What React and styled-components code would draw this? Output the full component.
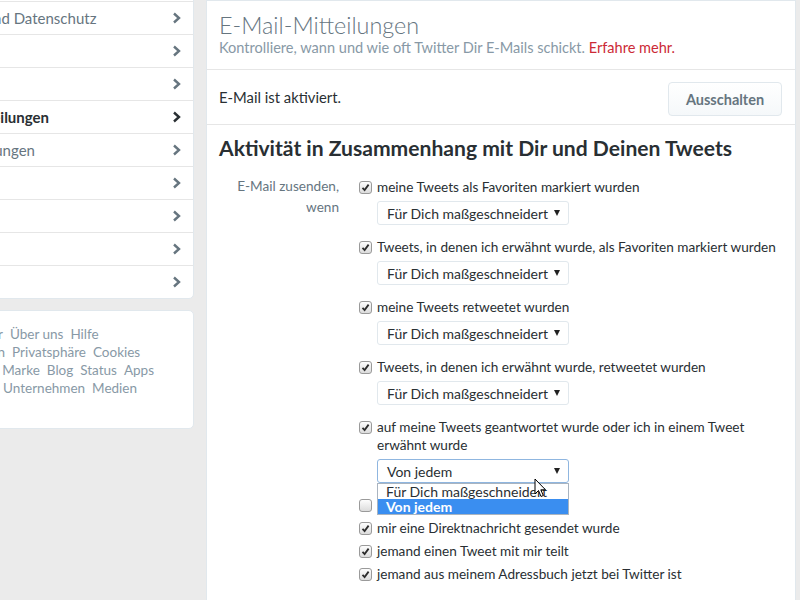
import React from "react";
import styled, { createGlobalStyle } from "styled-components";

const GlobalStyle = createGlobalStyle`
  html, body {
    margin: 0;
    padding: 0;
    background: #ebebeb;
    overflow: hidden;
  }
  body {
    font-family: Lato, "Liberation Sans", sans-serif;
    color: #292f33;
  }
`;

const Page = styled.div`
  display: flex;
  align-items: flex-start;
  gap: 12px;
  margin-left: -108px;
  width: 904px;
  height: 600px;
  overflow: hidden;
`;

const Sidebar = styled.div`
  width: 302px;
  flex-shrink: 0;
  display: flex;
  flex-direction: column;
  gap: 11px;
  margin-top: -32px;
`;

const NavList = styled.ul`
  list-style: none;
  margin: 0;
  padding: 0;
  background: #fff;
  border: 1px solid #e1e8ed;
  border-radius: 5px;
`;

const NavItem = styled.li`
  display: flex;
  align-items: center;
  justify-content: space-between;
  height: 32px;
  padding: 0 12px 0 22px;
  font-size: 15px;
  color: ${(p) => (p.$active ? "#292f33" : "#66757f")};
  font-weight: ${(p) => (p.$active ? 700 : 400)};
  & + & {
    border-top: 1px solid #e6e6e6;
  }
`;

const Chevron = ({ dark }) => (
  <svg width="9" height="12" viewBox="0 0 9 12">
    <path
      d="M2 1.5 L7 6 L2 10.5"
      fill="none"
      stroke={dark ? "#292f33" : "#66757f"}
      strokeWidth="2.4"
    />
  </svg>
);

const FooterBox = styled.div`
  background: #fff;
  border: 1px solid #e1e8ed;
  border-radius: 5px;
  padding: 14px 12px 31px 19px;
`;

const FooterLine = styled.div`
  display: flex;
  gap: 7px;
  font-size: 13.5px;
  line-height: 18px;
  color: #8899a6;
  white-space: nowrap;
`;

const Main = styled.div`
  width: 588px;
  flex-shrink: 0;
  background: #fff;
  border: 1px solid #e1e8ed;
  height: 700px;
`;

const Header = styled.div`
  padding: 10px 12px 12px;
  border-bottom: 1px solid #e6e6e6;
`;

const Title = styled.h1`
  margin: 0;
  font-size: 23.4px;
  line-height: 28px;
  font-weight: 300;
  color: #66757f;
`;

const Subtitle = styled.p`
  margin: 0;
  font-size: 14.55px;
  line-height: 18px;
  color: #8899a6;
  a {
    color: #cc2a36;
    text-decoration: none;
  }
`;

const StatusRow = styled.div`
  display: flex;
  align-items: center;
  justify-content: space-between;
  height: 54px;
  padding: 0 13px 0 12px;
  border-bottom: 1px solid #e6e6e6;
  font-size: 14.8px;
`;

const Button = styled.button`
  width: 114px;
  height: 34px;
  margin-top: 4px;
  border: 1px solid #e1e8ed;
  border-radius: 4px;
  background: linear-gradient(#ffffff, #f5f8fa);
  font-family: inherit;
  font-size: 14.5px;
  font-weight: 700;
  color: #66757f;
`;

const Section = styled.div`
  padding: 11px 12px 0;
`;

const SectionTitle = styled.h2`
  margin: 0 0 18px;
  font-size: 21.1px;
  line-height: 24px;
  font-weight: 700;
  color: #292f33;
`;

const Form = styled.div`
  display: grid;
  grid-template-columns: 120px 1fr;
  column-gap: 20px;
`;

const Label = styled.div`
  text-align: right;
  font-size: 13.6px;
  line-height: 21px;
  color: #66757f;
  margin-top: -2px;
`;

const Options = styled.div`
  display: flex;
  flex-direction: column;
`;

const Option = styled.div`
  margin-bottom: ${(p) => (p.$hasSelect ? "13px" : "5px")};
`;

const CheckLine = styled.label`
  display: flex;
  align-items: flex-start;
  gap: 5px;
  font-size: 13.6px;
  line-height: 18px;
  color: #292f33;
`;

const Box = styled.span`
  flex-shrink: 0;
  width: 11px;
  height: 11px;
  margin-top: 3px;
  border: 1px solid #9a9a9a;
  border-radius: 3px;
  background: linear-gradient(#fdfdfd, #dcdcdc);
  display: flex;
  align-items: center;
  justify-content: center;
`;

const Checkbox = ({ checked }) => (
  <Box>
    {checked && (
      <svg width="9" height="9" viewBox="0 0 9 9">
        <path
          d="M1.5 4.8 L3.6 7 L7.6 1.6"
          fill="none"
          stroke="#2b2b2b"
          strokeWidth="1.8"
        />
      </svg>
    )}
  </Box>
);

const SelectWrap = styled.div`
  position: relative;
  width: 192px;
  margin: 5px 0 0 18px;
`;

const SelectBox = styled.div`
  display: flex;
  align-items: center;
  justify-content: space-between;
  box-sizing: border-box;
  height: 24px;
  padding: 0 8px 0 9px;
  border: 1px solid ${(p) => (p.$focused ? "#8fb6e0" : "#e1e8ed")};
  border-radius: 3px;
  background: #fff;
  font-size: 14px;
  color: #292f33;
`;

const Arrow = styled.span`
  width: 0;
  height: 0;
  border-left: 3.5px solid transparent;
  border-right: 3.5px solid transparent;
  border-top: 6px solid #222;
`;

const Dropdown = styled.ul`
  position: absolute;
  top: 24px;
  left: 0;
  width: 192px;
  box-sizing: border-box;
  margin: 0;
  padding: 0;
  list-style: none;
  background: #fff;
  border: 1px solid #a9b4c0;
  z-index: 2;
`;

const DropItem = styled.li`
  height: 15px;
  line-height: 15px;
  padding: 0 8px;
  font-size: 14px;
  color: ${(p) => (p.$selected ? "#fff" : "#292f33")};
  background: ${(p) => (p.$selected ? "#3a8ef0" : "#fff")};
  font-weight: ${(p) => (p.$selected ? 700 : 400)};
`;

const Cursor = styled.svg`
  position: absolute;
  left: 157px;
  top: 19px;
  z-index: 3;
`;

const Select = ({ value, open }) => (
  <SelectWrap>
    <SelectBox $focused={open}>
      <span>{value}</span>
      <Arrow />
    </SelectBox>
    {open && (
      <>
        <Dropdown>
          <DropItem>Für Dich maßgeschneidert</DropItem>
          <DropItem $selected>Von jedem</DropItem>
        </Dropdown>
        <Cursor width="13" height="21" viewBox="0 0 13 21">
          <path
            d="M1 1 L1 16 L4.5 12.5 L7 18.5 L9.3 17.5 L6.8 11.8 L11.5 11.8 Z"
            fill="#fff"
            stroke="#000"
            strokeWidth="1"
          />
        </Cursor>
      </>
    )}
  </SelectWrap>
);

const navItems = [
  "Konto",
  "Sicherheit und Datenschutz",
  "Passwort",
  "Handy",
  "E-Mail-Mitteilungen",
  "Web-Mitteilungen",
  "Profil",
  "Design",
  "Apps",
  "Widgets",
];

const footerLines = [
  ["© 2013 Twitter", "Über uns", "Hilfe"],
  ["Nutzungsregeln", "Privatsphäre", "Cookies"],
  ["Anzeigeninfos", "Marke", "Blog", "Status", "Apps"],
  ["Werbekunden", "Unternehmen", "Medien"],
];

const options = [
  { text: "meine Tweets als Favoriten markiert wurden", checked: true, select: "Für Dich maßgeschneidert" },
  { text: "Tweets, in denen ich erwähnt wurde, als Favoriten markiert wurden", checked: true, select: "Für Dich maßgeschneidert" },
  { text: "meine Tweets retweetet wurden", checked: true, select: "Für Dich maßgeschneidert" },
  { text: "Tweets, in denen ich erwähnt wurde, retweetet wurden", checked: true, select: "Für Dich maßgeschneidert" },
  { text: "auf meine Tweets geantwortet wurde oder ich in einem Tweet erwähnt wurde", checked: true, select: "Von jedem", open: true },
  { text: "mir jemand folgt", checked: false },
  { text: "mir eine Direktnachricht gesendet wurde", checked: true },
  { text: "jemand einen Tweet mit mir teilt", checked: true },
  { text: "jemand aus meinem Adressbuch jetzt bei Twitter ist", checked: true },
];

export default function App() {
  return (
    <>
      <GlobalStyle />
      <Page>
        <Sidebar>
          <NavList>
            {navItems.map((item) => {
              const active = item === "E-Mail-Mitteilungen";
              return (
                <NavItem key={item} $active={active}>
                  <span>{item}</span>
                  <Chevron dark={active} />
                </NavItem>
              );
            })}
          </NavList>
          <FooterBox>
            {footerLines.map((line, i) => (
              <FooterLine key={i}>
                {line.map((l) => (
                  <span key={l}>{l}</span>
                ))}
              </FooterLine>
            ))}
          </FooterBox>
        </Sidebar>

        <Main>
          <Header>
            <Title>E-Mail-Mitteilungen</Title>
            <Subtitle>
              Kontrolliere, wann und wie oft Twitter Dir E-Mails schickt.{" "}
              <a href="#">Erfahre mehr.</a>
            </Subtitle>
          </Header>
          <StatusRow>
            <span>E-Mail ist aktiviert.</span>
            <Button>Ausschalten</Button>
          </StatusRow>
          <Section>
            <SectionTitle>
              Aktivität in Zusammenhang mit Dir und Deinen Tweets
            </SectionTitle>
            <Form>
              <Label>
                E-Mail zusenden,
                <br />
                wenn
              </Label>
              <Options>
                {options.map((o) => (
                  <Option key={o.text} $hasSelect={!!o.select}>
                    <CheckLine>
                      <Checkbox checked={o.checked} />
                      <span>{o.text}</span>
                    </CheckLine>
                    {o.select && <Select value={o.select} open={o.open} />}
                  </Option>
                ))}
              </Options>
            </Form>
          </Section>
        </Main>
      </Page>
    </>
  );
}
